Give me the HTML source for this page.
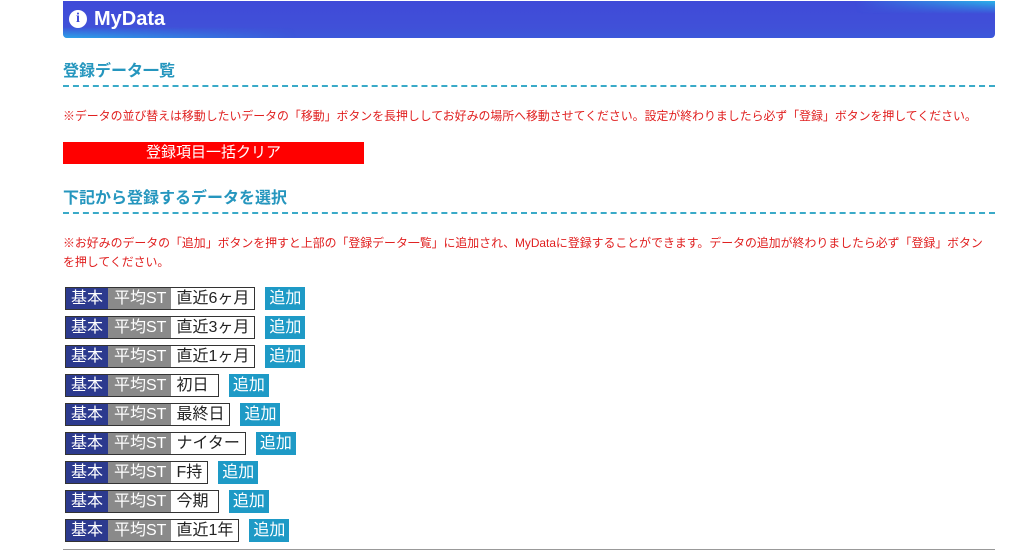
<!DOCTYPE html>
<html><head><meta charset="utf-8"><style>
*{margin:0;padding:0;box-sizing:border-box}
body{width:1024px;height:552px;overflow:hidden;background:#fff;font-family:"Liberation Sans","Noto Sans CJK JP",sans-serif;position:relative}
.hdr{position:absolute;left:63px;top:1px;width:932px;height:37px;border-radius:0 0 4px 4px;background:linear-gradient(to bottom,#3f4ad8 0%,#4050d8 70%,#3c58da 100%);overflow:hidden}
.hdr:before{content:"";position:absolute;left:0;top:0;right:0;bottom:0;background:linear-gradient(to bottom,rgba(40,160,230,0) 70%,rgba(40,180,235,.8) 100%);-webkit-mask:linear-gradient(to right,#000 0,transparent 25%);}
.hdr:after{content:"";position:absolute;left:0;top:0;right:0;bottom:0;background:linear-gradient(to top,rgba(40,180,235,0) 65%,rgba(40,190,235,.9) 100%);-webkit-mask:linear-gradient(to left,#000 0,transparent 15%);}
.hdr span{position:absolute;left:31px;top:7px;color:#fff;font-weight:bold;font-size:20px;z-index:2}
.hdr i{position:absolute;left:6px;top:9px;width:18px;height:18px;border-radius:50%;background:#fff;z-index:2;color:#3f4ad8;font-style:normal;font-weight:bold;font-size:14px;text-align:center;line-height:18px;font-family:"Liberation Serif",serif}
h2{position:absolute;left:63px;width:932px;font-size:16px;color:#2596be;font-weight:bold;border-bottom:2px dashed #3aaac8;padding-bottom:4px;line-height:19px}
.note{position:absolute;left:63px;width:945px;font-size:11.9px;color:#e02020;line-height:19px}
.clr{position:absolute;left:63px;top:142px;width:301px;height:22px;background:#ff0000;color:#fff;text-align:center;font-size:15px;line-height:22px}
.row{position:absolute;left:65px;height:23px;display:flex;align-items:center}
.b{display:flex;border:1px solid #333;height:23px;font-size:16px;line-height:21px}
.b1{background:#2c3a8e;color:#fff;padding:0 5px;width:42px}
.b2{background:#8a8a8a;color:#fff;padding:0 5px 0 6px}
.b3{background:#fff;color:#222;padding:0 5px}
.add{margin-left:10px;background:#1e9ac6;color:#fff;font-size:16px;height:23px;line-height:23px;padding:0 4px}
.bot{position:absolute;left:63px;top:549px;width:932px;border-top:1px solid #999}
</style></head><body>
<div class="hdr"><i>i</i><span>MyData</span></div>
<h2 style="top:62px">登録データ一覧</h2>
<div class="note" style="top:107px">※データの並び替えは移動したいデータの「移動」ボタンを長押ししてお好みの場所へ移動させてください。設定が終わりましたら必ず「登録」ボタンを押してください。</div>
<div class="clr">登録項目一括クリア</div>
<h2 style="top:189px">下記から登録するデータを選択</h2>
<div class="note" style="top:234px">※お好みのデータの「追加」ボタンを押すと上部の「登録データ一覧」に追加され、MyDataに登録することができます。データの追加が終わりましたら必ず「登録」ボタン<br>を押してください。</div>
<div class="row" style="top:287px"><div class="b"><span class="b1">基本</span><span class="b2">平均ST</span><span class="b3">直近6ヶ月</span></div><span class="add">追加</span></div>
<div class="row" style="top:316px"><div class="b"><span class="b1">基本</span><span class="b2">平均ST</span><span class="b3">直近3ヶ月</span></div><span class="add">追加</span></div>
<div class="row" style="top:345px"><div class="b"><span class="b1">基本</span><span class="b2">平均ST</span><span class="b3">直近1ヶ月</span></div><span class="add">追加</span></div>
<div class="row" style="top:374px"><div class="b"><span class="b1">基本</span><span class="b2">平均ST</span><span class="b3">初日&nbsp;</span></div><span class="add">追加</span></div>
<div class="row" style="top:403px"><div class="b"><span class="b1">基本</span><span class="b2">平均ST</span><span class="b3">最終日</span></div><span class="add">追加</span></div>
<div class="row" style="top:432px"><div class="b"><span class="b1">基本</span><span class="b2">平均ST</span><span class="b3">ナイター</span></div><span class="add">追加</span></div>
<div class="row" style="top:461px"><div class="b"><span class="b1">基本</span><span class="b2">平均ST</span><span class="b3">F持</span></div><span class="add">追加</span></div>
<div class="row" style="top:490px"><div class="b"><span class="b1">基本</span><span class="b2">平均ST</span><span class="b3">今期&nbsp;</span></div><span class="add">追加</span></div>
<div class="row" style="top:519px"><div class="b"><span class="b1">基本</span><span class="b2">平均ST</span><span class="b3">直近1年</span></div><span class="add">追加</span></div>
<div class="bot"></div>
</body></html>
